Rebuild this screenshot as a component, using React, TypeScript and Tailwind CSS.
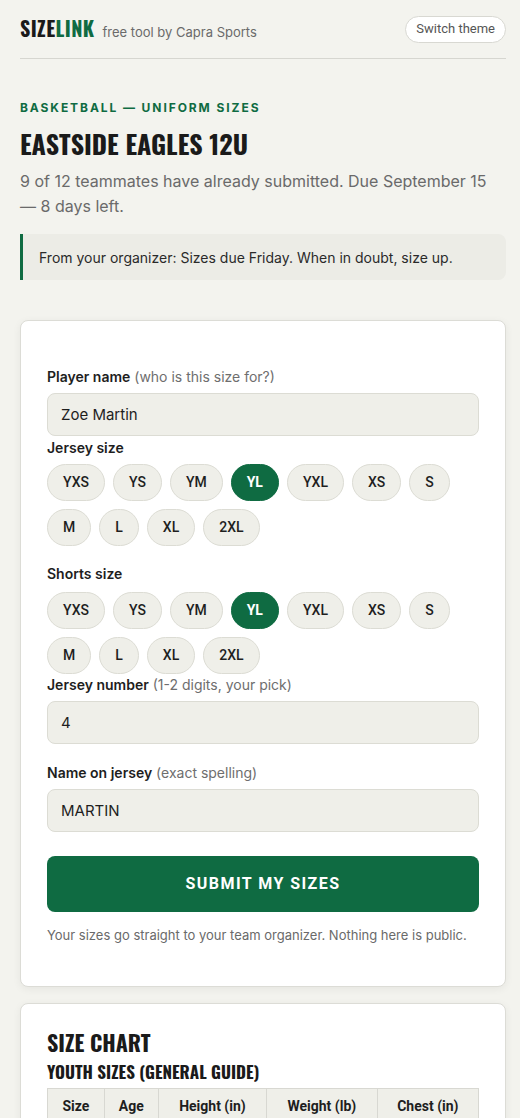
import React, { useState } from "react";

const HEAD = "font-['Oswald','Liberation_Sans_Narrow','DejaVu_Sans_Condensed',sans-serif]";
const BTN = "font-['Roboto','Liberation_Sans',sans-serif]";

const SIZES = ["YXS", "YS", "YM", "YL", "YXL", "XS", "S", "M", "L", "XL", "2XL"];

const SizePicker = ({
  value,
  onChange,
  className = "mt-[6px]",
}: {
  value: string;
  onChange: (v: string) => void;
  className?: string;
}) => (
  <div className={`flex flex-wrap gap-2 ${className}`}>
    {SIZES.map((s) => (
      <button
        key={s}
        type="button"
        onClick={() => onChange(s)}
        className={
          s === value
            ? `${BTN} h-[37px] px-[15px] rounded-full text-[14px] font-bold bg-[#0f6b42] text-white border border-[#0f6b42]`
            : `${BTN} h-[37px] px-[15px] rounded-full text-[14px] font-medium bg-[#efefe9] text-[#1f1f1f] border border-[#dcdcd4]`
        }
      >
        {s}
      </button>
    ))}
  </div>
);

const Label = ({ main, hint }: { main: string; hint?: string }) => (
  <label className="block text-[14px] font-semibold text-[#1e1e1e] leading-[20px]">
    {main}
    {hint && <span className="font-normal text-[#6e6e6e]"> {hint}</span>}
  </label>
);

const Field = ({ value }: { value: string }) => (
  <input
    defaultValue={value}
    className="mt-[6px] w-full h-[43px] px-[13px] rounded-lg bg-[#efefe9] border border-[#dcdcd4] text-[15px] text-[#1e1e1e] outline-none"
  />
);

export default function App() {
  const [jersey, setJersey] = useState("YL");
  const [shorts, setShorts] = useState("YL");

  return (
    <div className="min-h-screen bg-[#f3f3ee] font-['Inter',sans-serif] text-[#1e1e1e] pl-5 pr-[14px]">
      {/* header */}
      <header className="flex items-center justify-between h-[59px] border-b border-[#d6d6d0]">
        <div className="flex items-baseline gap-[8px] pt-[2px]">
          <span className={`${HEAD} text-[20px] font-bold tracking-[0.02em] leading-none`}>
            <span className="text-[#1a1a1a]">SIZE</span>
            <span className="text-[#0f6b42]">LINK</span>
          </span>
          <span className="text-[13px] text-[#6a6a6a]">free tool by Capra Sports</span>
        </div>
        <button
          type="button"
          className={`${BTN} h-[27px] px-[10px] rounded-full bg-white border border-[#d8d8d2] text-[13px] text-[#555]`}
        >
          Switch theme
        </button>
      </header>

      {/* intro */}
      <section className="pt-[40px]">
        <p className="text-[12px] font-bold tracking-[0.16em] text-[#0f6b42] uppercase">
          Basketball — Uniform Sizes
        </p>
        <h1 className={`${HEAD} mt-[10px] text-[26px] font-bold leading-[34px] text-[#1a1a1a]`}>
          EASTSIDE EAGLES 12U
        </h1>
        <p className="mt-[8px] text-[16px] leading-[25px] text-[#6a6a6a]">
          9 of 12 teammates have already submitted. Due September 15 — 8 days left.
        </p>
        <div className="mt-[15px] h-[46px] flex items-center pl-[16px] bg-[#ececE6] border-l-[3px] border-[#0f6b42] rounded-r-lg text-[14px] text-[#2a2a2a]">
          From your organizer: Sizes due Friday. When in doubt, size up.
        </div>
      </section>

      {/* form card */}
      <form className="mt-[40px] bg-white border border-[#dcdcd6] rounded-lg shadow-[0_2px_8px_rgba(0,0,0,0.06)] px-[26px] pt-[46px] pb-[40px]">
        <Label main="Player name" hint="(who is this size for?)" />
        <Field value="Zoe Martin" />

        <div className="mt-[2px]">
          <Label main="Jersey size" />
          <SizePicker value={jersey} onChange={setJersey} />
        </div>

        <div className="mt-[18px]">
          <Label main="Shorts size" />
          <SizePicker value={shorts} onChange={setShorts} className="mt-[8px]" />
        </div>

        <div className="mt-[1px]">
          <Label main="Jersey number" hint="(1-2 digits, your pick)" />
          <Field value="4" />
        </div>

        <div className="mt-[19px]">
          <Label main="Name on jersey" hint="(exact spelling)" />
          <Field value="MARTIN" />
        </div>

        <button
          type="button"
          className={`${BTN} mt-[24px] w-full h-[56px] rounded-lg bg-[#0f6b42] text-white text-[16px] font-bold tracking-[0.09em]`}
        >
          SUBMIT MY SIZES
        </button>
        <p className="mt-[14px] text-[13px] text-[#6a6a6a]">
          Your sizes go straight to your team organizer. Nothing here is public.
        </p>
      </form>

      {/* size chart */}
      <section className="mt-[16px] mb-10 bg-white border border-[#dcdcd6] rounded-lg shadow-[0_2px_8px_rgba(0,0,0,0.06)] px-[26px] pt-[23px] pb-[30px]">
        <h2 className={`${HEAD} text-[22px] font-bold leading-[30px] text-[#1a1a1a]`}>SIZE CHART</h2>
        <h3 className={`${HEAD} mt-[3px] text-[17px] font-bold leading-[24px] text-[#1a1a1a]`}>
          YOUTH SIZES (GENERAL GUIDE)
        </h3>
        <table className={`${BTN} mt-[4px] w-full border-collapse text-[14px]`}>
          <thead>
            <tr className="bg-[#efefe9]">
              {["Size", "Age", "Height (in)", "Weight (lb)", "Chest (in)"].map((h) => (
                <th key={h} className="border border-[#d8d8d2] h-[36px] font-bold text-[#1e1e1e] px-2">
                  {h}
                </th>
              ))}
            </tr>
          </thead>
          <tbody>
            {[
              ["YXS", "4–5", "40–44", "35–45", "22–24"],
              ["YS", "6–7", "45–50", "46–60", "24–26"],
              ["YM", "8–10", "51–56", "61–80", "26–28"],
              ["YL", "11–13", "57–61", "81–100", "28–30"],
            ].map((r) => (
              <tr key={r[0]}>
                {r.map((c, i) => (
                  <td key={i} className="border border-[#d8d8d2] h-[36px] text-center text-[#333]">
                    {c}
                  </td>
                ))}
              </tr>
            ))}
          </tbody>
        </table>
      </section>
    </div>
  );
}
